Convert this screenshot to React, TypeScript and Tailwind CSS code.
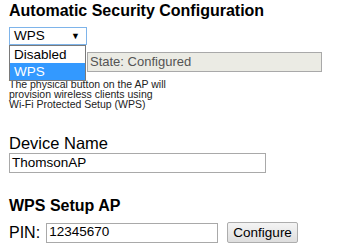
export default function App() {
  return (
    <div className="w-[340px] h-[248px] bg-white pl-[9px] pt-[1px] text-black overflow-hidden" style={{ fontFamily: '"Liberation Sans", Arial, sans-serif' }}>
      <h2 className="text-[16px] font-bold leading-[20px]">Automatic Security Configuration</h2>

      <div className="relative mt-[6px] w-[78px]">
        {/* select, opened */}
        <div className="h-[18px] w-[78px] border border-[#7eb4ea] flex items-center justify-between pl-[4px] pr-[6px] text-[13.5px] leading-none">
          <span>WPS</span>
          <span className="text-[9px]">▼</span>
        </div>
        <div className="absolute left-0 top-[18px] z-10 w-[77px] border border-[#7a7a7a] bg-white text-[13.5px] leading-[17px]">
          <div className="pl-[4px]">Disabled</div>
          <div className="pl-[4px] bg-[#3399ff] text-white">WPS</div>
        </div>
      </div>

      <div className="mt-[7px] ml-[78px] w-[235px] h-[20px] border border-[#a9a9a9] bg-[#ebebe4] flex items-center pl-[2px] text-[13px] text-[#545454]">
        State: Configured
      </div>

      <p className="mt-[7px] text-[10.5px] leading-[10px] text-[#222]">
        The physical button on the AP will<br />
        provision wireless clients using<br />
        Wi-Fi Protected Setup (WPS)
      </p>

      <div className="mt-[26px] text-[16.5px] leading-[17px]">Device Name</div>
      <div className="mt-[1px] w-[257px] h-[20px] border border-[#a9a9a9] flex items-center pl-[2px] text-[13.5px]">
        ThomsonAP
      </div>

      <h3 className="mt-[23px] text-[16px] font-bold leading-[20px]">WPS Setup AP</h3>
      <div className="mt-[6px] flex items-center">
        <span className="text-[16px] leading-[20px]">PIN:</span>
        <div className="ml-[6px] w-[172px] h-[20px] border border-[#a9a9a9] flex items-center pl-[2px] text-[13.5px]">
          12345670
        </div>
        <button className="ml-[9px] w-[71px] h-[21px] border border-[#adadad] rounded-[2px] bg-gradient-to-b from-[#f4f4f4] to-[#dedede] text-[13.5px] leading-none">
          Configure
        </button>
      </div>
    </div>
  );
}
